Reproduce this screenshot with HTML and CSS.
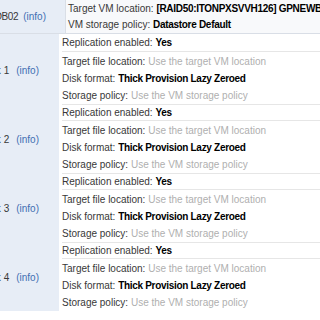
FILE: index.html
```html
<!DOCTYPE html>
<html>
<head>
<meta charset="UTF-8">
<title>Ready to complete</title>
<link rel="stylesheet" href="styles.css">
</head>
<body>
	<div class="summary">
		<div class="vm-row">
			<div class="name-cell vm-name"><span>GPNEWBWDB02</span><a class="info">(info)</a></div>
			<div class="vm-props">
				<div>Target VM location: <b>[RAID50:ITONPXSVVH126] GPNEWBWDB02/GPNEWBWDB02.vmx</b></div>
				<div>VM storage policy: <b>Datastore Default</b></div>
			</div>
		</div>
		<div class="row">
			<div class="name-cell"></div>
			<div class="rep rep-first">Replication enabled: <b>Yes</b></div>
		</div>

		<div class="row">
			<div class="name-cell disk-name"><span>Hard disk 1</span><a class="info">(info)</a></div>
			<div class="disk-props">
				<div>Target file location: <span class="muted">Use the target VM location</span></div>
				<div>Disk format: <b>Thick Provision Lazy Zeroed</b></div>
				<div>Storage policy: <span class="muted">Use the VM storage policy</span></div>
			</div>
		</div>
		<div class="row">
			<div class="name-cell"></div>
			<div class="rep">Replication enabled: <b>Yes</b></div>
		</div>

		<div class="row">
			<div class="name-cell disk-name"><span>Hard disk 2</span><a class="info">(info)</a></div>
			<div class="disk-props">
				<div>Target file location: <span class="muted">Use the target VM location</span></div>
				<div>Disk format: <b>Thick Provision Lazy Zeroed</b></div>
				<div>Storage policy: <span class="muted">Use the VM storage policy</span></div>
			</div>
		</div>
		<div class="row">
			<div class="name-cell"></div>
			<div class="rep">Replication enabled: <b>Yes</b></div>
		</div>

		<div class="row">
			<div class="name-cell disk-name"><span>Hard disk 3</span><a class="info">(info)</a></div>
			<div class="disk-props">
				<div>Target file location: <span class="muted">Use the target VM location</span></div>
				<div>Disk format: <b>Thick Provision Lazy Zeroed</b></div>
				<div>Storage policy: <span class="muted">Use the VM storage policy</span></div>
			</div>
		</div>
		<div class="row">
			<div class="name-cell"></div>
			<div class="rep">Replication enabled: <b>Yes</b></div>
		</div>

		<div class="row">
			<div class="name-cell disk-name"><span>Hard disk 4</span><a class="info">(info)</a></div>
			<div class="disk-props">
				<div>Target file location: <span class="muted">Use the target VM location</span></div>
				<div>Disk format: <b>Thick Provision Lazy Zeroed</b></div>
				<div>Storage policy: <span class="muted">Use the VM storage policy</span></div>
			</div>
		</div>
	</div>
</body>
</html>
```

FILE: styles.css
```css
/* summary page */
html, body {
	margin: 0;
	overflow: hidden;
	background-color: #ffffff;
}

body {
	font-family: "Liberation Sans", Arial, sans-serif;
	font-size: 10px;
	color: #383838;
}

.summary {
	white-space: nowrap;
}

b {
	color: #000000;
	letter-spacing: -0.3px;
}

.muted {
	color: #afafaf;
}

.row {
	display: flex;
}

.name-cell {
	flex: 0 0 59px;
	box-sizing: border-box;
	display: flex;
	justify-content: flex-end;
	overflow: hidden;
	padding-right: 20px;
	background-color: #e7edf6;
	color: #383838;
}

.info {
	margin-left: 7px;
	color: #3f6fb3;
}

/* vm row */
.vm-row {
	display: flex;
	height: 33px;
	border-bottom: 1px solid #d9dee6;
}

.vm-name {
	flex-basis: 66px;
	align-items: center;
	padding-right: 19px;
	border-right: 1px solid #d9dee6;
}

.vm-name span {
	letter-spacing: -0.4px;
}

.vm-name .info {
	margin-left: 5px;
}

.vm-props {
	flex: 1;
	padding: 1px 0 0 2px;
	line-height: 16px;
	background-color: #f8f9fb;
}

/* disk rows */
.disk-name {
	align-items: flex-start;
	padding-top: 10px;
	line-height: 17px;
}

.disk-props {
	flex: 1;
	padding: 1px 0 0 3px;
	line-height: 17px;
}

.rep {
	flex: 1;
	margin-left: 3px;
	line-height: 15px;
	border-top: 1px solid #e6e6e6;
	border-bottom: 1px solid #e6e6e6;
}

.rep-first {
	line-height: 17px;
	border-top: none;
}
```
